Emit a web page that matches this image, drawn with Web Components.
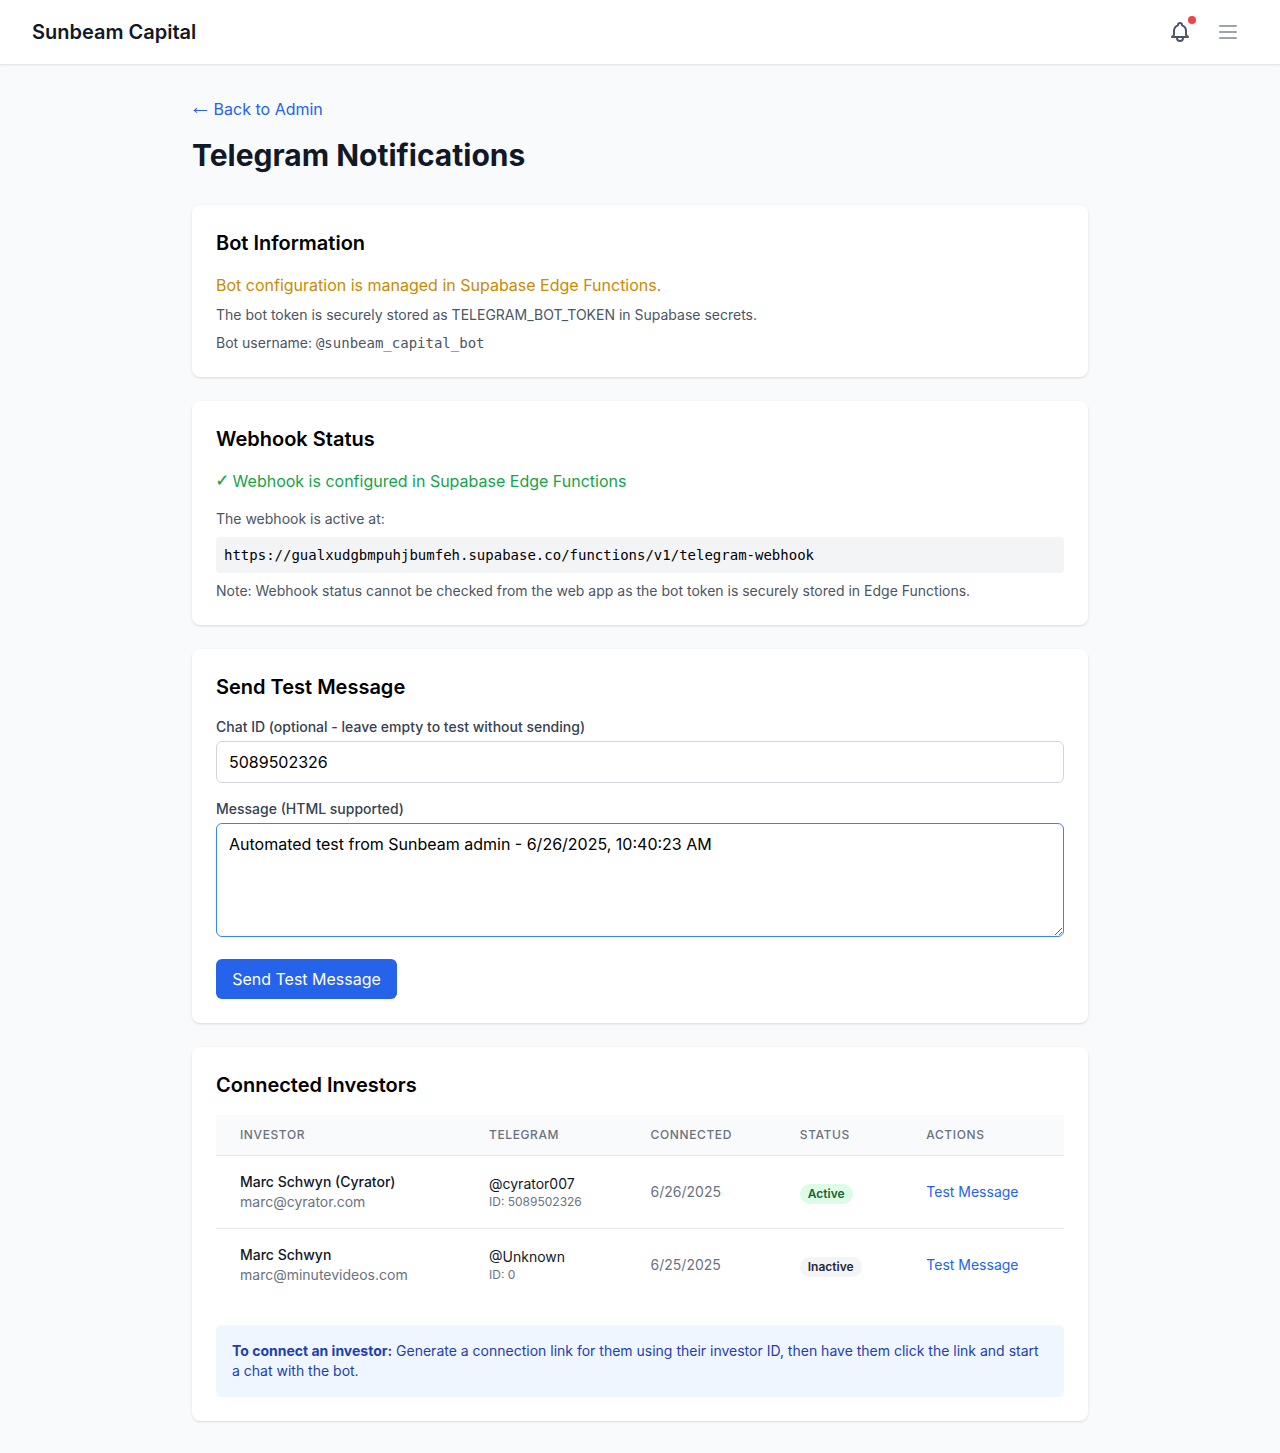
<!DOCTYPE html>
<html lang="en">
<head>
<meta charset="utf-8">
<title>Telegram Notifications</title>
<style>
body{margin:0;background:#f9fafb;font:16px/24px Inter,"Liberation Sans",sans-serif;color:#000}
</style>
</head>
<body>
<app-page></app-page>
<script>
const define = (name, html) => {
  const t = document.createElement('template');
  t.innerHTML = '<style>*{box-sizing:border-box}:host{display:block}</style>' + html;
  customElements.define(name, class extends HTMLElement {
    constructor() {
      super();
      this.attachShadow({mode: 'open'}).append(t.content.cloneNode(true));
    }
  });
};

define('app-header', `<style>
:host{background:#fff;border-bottom:1px solid #e5e7eb;box-shadow:0 1px 2px rgba(0,0,0,.05);position:relative}
nav{height:64px;padding:0 32px;display:flex;align-items:center;justify-content:space-between}
.brand{font-size:20px;line-height:28px;font-weight:600;color:#111827}
.tools{display:flex;align-items:center;gap:8px}
.btn{width:40px;height:40px;display:grid;place-items:center;position:relative;color:#4b5563}
.menu{color:#9ca3af}
.dot{position:absolute;width:8px;height:8px;border-radius:50%;background:#ef4444;top:4px;right:4px}
svg{display:block}
</style>
<nav><span class="brand">Sunbeam Capital</span>
<div class="tools">
<div class="btn"><svg width="24" height="24" viewBox="0 0 24 24" fill="none" stroke="currentColor" stroke-width="2" stroke-linecap="round" stroke-linejoin="round"><path d="M15 17h5l-1.405-1.405A2.032 2.032 0 0118 14.158V11a6.002 6.002 0 00-4-5.659V5a2 2 0 10-4 0v.341C7.67 6.165 6 8.388 6 11v3.159c0 .538-.214 1.055-.595 1.436L4 17h5m6 0v1a3 3 0 11-6 0v-1m6 0H9"/></svg><span class="dot"></span></div>
<div class="btn menu"><svg width="24" height="24" viewBox="0 0 24 24" fill="none" stroke="currentColor" stroke-width="2" stroke-linecap="round"><path d="M4 6h16M4 12h16M4 18h16"/></svg></div>
</div></nav>`);

define('page-title', `<style>
a{display:flex;width:max-content;height:24px;gap:4.6px;color:#2563eb;text-decoration:none}
.arrow{width:17px;text-indent:-3.5px;white-space:nowrap;font-family:"Liberation Sans",sans-serif;font-size:23px;line-height:18px}
h1{margin:16px 0 32px;font-size:30px;line-height:36px;font-weight:700;color:#111827}
</style><a href="#"><span class="arrow">←</span><span>Back to Admin</span></a><h1><slot></slot></h1>`);

define('info-card', `<style>
:host{background:#fff;border-radius:8px;padding:24px;box-shadow:0 1px 3px rgba(0,0,0,.1),0 1px 2px -1px rgba(0,0,0,.1)}
h2{margin:0 0 16px;font-size:20px;line-height:28px;font-weight:600}
</style><h2><slot name="heading"></slot></h2><slot></slot>`);

define('bot-info', `<style>
p{margin:0}.lead{color:#ca8a04}.sm{font-size:14px;line-height:20px;margin-top:8px;color:#4b5563}
.mono{font-family:"DejaVu Sans Mono",monospace}
</style><p class="lead">Bot configuration is managed in Supabase Edge Functions.</p>
<p class="sm">The bot token is securely stored as TELEGRAM_BOT_TOKEN in Supabase secrets.</p>
<p class="sm">Bot username: <span class="mono">@sunbeam_capital_bot</span></p>`);

define('webhook-status', `<style>
p{margin:0}.ok{display:flex;gap:4.5px;height:24px;color:#16a34a;margin-bottom:16px}.sm{font-size:14px;line-height:20px;color:#4b5563}
.tick{width:12.1px;text-indent:-.5px;font-family:"DejaVu Sans",sans-serif;font-size:16px;-webkit-text-stroke:.4px currentColor}
code{display:block;margin:8px 0;padding:8px;border-radius:4px;background:#f3f4f6;font:14px/20px "DejaVu Sans Mono",monospace}
</style><p class="ok"><span class="tick">✓</span><span>Webhook is configured in Supabase Edge Functions</span></p>
<p class="sm">The webhook is active at:</p>
<code>https://gualxudgbmpuhjbumfeh.supabase.co/functions/v1/telegram-webhook</code>
<p class="sm">Note: Webhook status cannot be checked from the web app as the bot token is securely stored in Edge Functions.</p>`);

define('test-form', `<style>
label{display:block;font-size:14px;line-height:20px;font-weight:500;color:#374151;margin-bottom:4px}
input,textarea{display:block;width:100%;margin:0;padding:8px 12px;border:1px solid #d1d5db;border-radius:6px;background:#fff;color:#000;font:inherit;outline:0}
input{height:42px;margin-bottom:16px}
textarea{height:114px;border-color:#3b82f6;resize:vertical;margin-bottom:22px}
button{display:block;width:181px;height:40px;padding:0;border:0;border-radius:6px;background:#2563eb;color:#fff;font:inherit}
</style><label for="chat">Chat ID (optional - leave empty to test without sending)</label>
<input id="chat" type="text" value="5089502326">
<label for="msg">Message (HTML supported)</label>
<textarea id="msg">Automated test from Sunbeam admin - 6/26/2025, 10:40:23 AM</textarea>
<button type="button">Send Test Message</button>`);

define('status-badge', `<style>
:host{display:inline-block;margin-top:4px;padding:0 8px;border-radius:10px;font-size:12px;line-height:20px;font-weight:600;background:#f3f4f6;color:#1f2937}
:host([active]){background:#dcfce7;color:#166534}
</style><slot></slot>`);

define('investor-row', `<style>
:host{display:grid;grid-template-columns:var(--cols);align-items:center;height:72px;font-size:14px;line-height:20px;color:#6b7280;white-space:nowrap}
:host([divided]){border-bottom:1px solid #e5e7eb;height:73px}
div{padding-left:24px}
.name{font-weight:500;color:#111827}.user{color:#111827}
.id{font-size:12px;line-height:16px}
span{display:block}
a{color:#2563eb;text-decoration:none}
</style>
<div><span class="name"><slot name="name"></slot></span><span><slot name="email"></slot></span></div>
<div><span class="user"><slot name="user"></slot></span><span class="id"><slot name="id"></slot></span></div>
<div><slot name="date"></slot></div>
<div><slot name="status"></slot></div>
<div><a href="#">Test Message</a></div>`);

define('investor-table', `<style>
:host{--cols:249px 161.6px 149.2px 126.5px 1fr}
.head{display:grid;grid-template-columns:var(--cols);background:#f9fafb;border-bottom:1px solid #e5e7eb;font-size:12px;line-height:16px;font-weight:500;letter-spacing:.6px;color:#6b7280}
.head span{padding:12px 0 12px 24px}
.note{margin-top:24px;padding:16px;border-radius:6px;background:#eff6ff;color:#1e40af;font-size:14px;line-height:20px}
</style>
<div class="head"><span>INVESTOR</span><span>TELEGRAM</span><span>CONNECTED</span><span>STATUS</span><span>ACTIONS</span></div>
<investor-row divided><span slot="name">Marc Schwyn (Cyrator)</span><span slot="email">marc@cyrator.com</span><span slot="user">@cyrator007</span><span slot="id">ID: 5089502326</span><span slot="date">6/26/2025</span><status-badge slot="status" active>Active</status-badge></investor-row>
<investor-row><span slot="name">Marc Schwyn</span><span slot="email">marc@minutevideos.com</span><span slot="user">@Unknown</span><span slot="id">ID: 0</span><span slot="date">6/25/2025</span><status-badge slot="status">Inactive</status-badge></investor-row>
<div class="note"><strong>To connect an investor:</strong> Generate a connection link for them using their investor ID, then have them click the link and start a chat with the bot.</div>`);

define('app-page', `<style>
main{width:896px;margin:0 auto;padding:32px 0}
.cards{display:flex;flex-direction:column;gap:24px}
</style><app-header></app-header>
<main><page-title>Telegram Notifications</page-title>
<div class="cards">
<info-card><span slot="heading">Bot Information</span><bot-info></bot-info></info-card>
<info-card><span slot="heading">Webhook Status</span><webhook-status></webhook-status></info-card>
<info-card><span slot="heading">Send Test Message</span><test-form></test-form></info-card>
<info-card><span slot="heading">Connected Investors</span><investor-table></investor-table></info-card>
</div></main>`);
</script>
</body>
</html>
